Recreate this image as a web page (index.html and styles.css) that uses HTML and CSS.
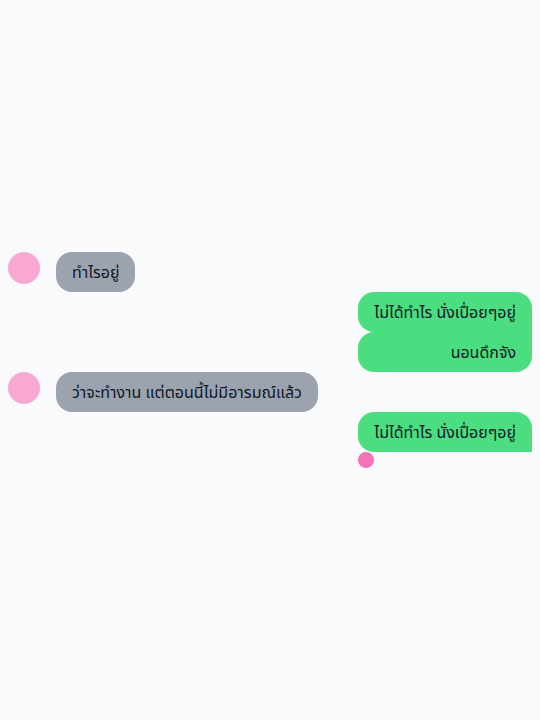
FILE: index.html
```html
<!DOCTYPE html>
<html lang="th">
<head>
<meta charset="utf-8">
<link rel="stylesheet" href="styles.css">
</head>
<body>
<main class="chat">
  <div class="row left">
    <span class="avatar"></span>
    <div class="bubble gray">ทำไรอยู่</div>
  </div>
  <div class="row right">
    <div class="group">
      <div class="bubble green first">ไม่ได้ทำไร นั่งเปื่อยๆอยู่</div>
      <div class="bubble green last">นอนดึกจัง</div>
    </div>
  </div>
  <div class="row left">
    <span class="avatar"></span>
    <div class="bubble gray">ว่าจะทำงาน แต่ตอนนี้ไม่มีอารมณ์แล้ว</div>
  </div>
  <div class="row right">
    <div class="group">
      <div class="bubble green single">ไม่ได้ทำไร นั่งเปื่อยๆอยู่</div>
      <span class="dot"></span>
    </div>
  </div>
</main>
</body>
</html>
```
FILE: styles.css
```css
html, body {
  margin: 0;
  padding: 0;
  background: #f8fafc;
}
body {
  font-family: "Noto Sans", "Noto Sans Thai", sans-serif;
  font-size: 16px;
  line-height: 24px;
  color: #111827;
}
.chat {
  min-height: 720px;
  display: flex;
  flex-direction: column;
  justify-content: center;
  padding: 0 8px;
  box-sizing: border-box;
}
.row {
  display: flex;
  align-items: flex-start;
}
.row.left {
  gap: 16px;
}
.row.right {
  justify-content: flex-end;
}
.avatar {
  width: 32px;
  height: 32px;
  border-radius: 50%;
  background: #f9a8d4;
  flex: none;
}
.bubble {
  padding: 8px 16px;
  border-radius: 16px;
  white-space: nowrap;
}
.gray {
  background: #9ca3af;
}
.green {
  background: #4ade80;
  text-align: right;
}
.group {
  display: flex;
  flex-direction: column;
  align-items: stretch;
}
.green.first {
  border-bottom-right-radius: 0;
}
.green.last {
  border-top-right-radius: 0;
}
.green.single {
  border-bottom-right-radius: 0;
}
.dot {
  width: 16px;
  height: 16px;
  border-radius: 50%;
  background: #f472b6;
}
```
